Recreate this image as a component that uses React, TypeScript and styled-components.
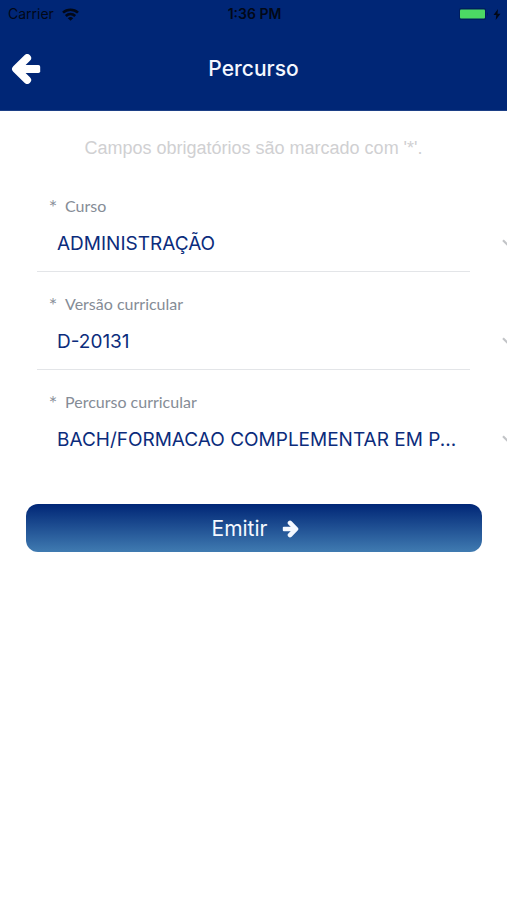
import React from "react";
import styled, { createGlobalStyle } from "styled-components";

const GlobalStyle = createGlobalStyle`
  * { box-sizing: border-box; }
  body {
    margin: 0;
    background: #ffffff;
    font-family: Inter, "Liberation Sans", sans-serif;
  }
`;

const Page = styled.div`
  min-height: 100vh;
  overflow-x: hidden;
`;

const Header = styled.header`
  background: #002676;
  border-bottom: 1px solid #1c3f86;
`;

const StatusBar = styled.div`
  display: grid;
  grid-template-columns: 1fr auto 1fr;
  align-items: center;
  height: 28px;
  padding: 0 6px 0 8px;
  color: #020817;
  font-size: 14px;
  line-height: 20px;
`;

const StatusGroup = styled.div<{ $end?: boolean }>`
  display: flex;
  align-items: center;
  justify-content: ${(p) => (p.$end ? "flex-end" : "flex-start")};
  gap: ${(p) => (p.$end ? 4 : 8)}px;
`;

const Clock = styled.time`
  font-weight: 600;
`;

const NavBar = styled.div`
  display: grid;
  grid-template-columns: 52px 1fr 52px;
  align-items: center;
  height: 82px;
`;

const BackButton = styled.button`
  display: flex;
  align-items: center;
  height: 52px;
  padding: 0 0 0 11px;
  border: 0;
  background: none;
  color: #ffffff;
`;

const Title = styled.h1`
  margin: 0;
  color: #f4f7ff;
  font-size: 21px;
  font-weight: 500;
  line-height: 24px;
  text-align: center;
`;

const Hint = styled.p`
  margin: 0;
  padding: 25px 0 14px;
  color: #d0d0d2;
  font-family: "Liberation Sans", sans-serif;
  font-size: 18px;
  line-height: 24px;
  text-align: center;
`;

const Field = styled.div`
  padding-top: 22px;
`;

const Label = styled.label`
  display: flex;
  gap: 8px;
  padding-left: 49px;
  color: #858c96;
  font-family: Lato, sans-serif;
  font-size: 16px;
  line-height: 20px;
`;

const Required = styled.span`
  font-family: Inter, sans-serif;
  font-weight: 300;
`;

const ControlRow = styled.div`
  display: flex;
  align-items: center;
  padding-left: 37px;
`;

const SelectBox = styled.div<{ $last?: boolean }>`
  flex: 1;
  min-width: 0;
  height: 56px;
  border-bottom: 1px solid ${(p) => (p.$last ? "transparent" : "#e3e5e8")};
`;

const Select = styled.select`
  display: block;
  width: 100%;
  height: 55px;
  padding: 0 4px 0 20px;
  border: 0;
  background: none;
  appearance: none;
  color: #0b2c7c;
  font-family: inherit;
  font-size: 19px;
  text-overflow: ellipsis;
`;

const ChevronSlot = styled.span`
  display: flex;
  flex: none;
  margin: 0 -9px 0 32px;
`;

const Actions = styled.div`
  padding: 36px 25px 0 26px;
`;

const SubmitButton = styled.button`
  display: flex;
  align-items: center;
  justify-content: center;
  gap: 15px;
  width: 100%;
  height: 48px;
  padding: 2px 0 0 3px;
  border: 0;
  border-radius: 12px;
  background: linear-gradient(#002676, #407bb1);
  color: #f4f8ff;
  font-family: inherit;
  font-size: 21px;
  line-height: 28px;
`;

const WifiIcon = () => (
  <svg width="17" height="13" viewBox="0 0 17 13" fill="none" stroke="currentColor" strokeWidth="2.6" aria-hidden="true">
    <path d="M1 4.6C5.2.7 11.8.7 16 4.6" />
    <path d="M3.8 8C6.5 5.5 10.5 5.5 13.2 8" />
    <path d="M8.5 12.8 5.8 10.2Q8.5 8 11.2 10.2Z" fill="currentColor" stroke="none" />
  </svg>
);

const BatteryIcon = () => (
  <svg width="31" height="12" viewBox="0 0 31 12" aria-hidden="true">
    <rect x="1" y="0" width="27" height="12" rx="2" fill="#001e5e" />
    <rect x="2" y="1.5" width="25" height="9" rx="1" fill="#4cd964" />
    <path d="M29 4q2 2 0 4z" fill="#001e5e" />
  </svg>
);

const BoltIcon = () => (
  <svg width="8" height="11" viewBox="0 0 8 11" fill="currentColor" aria-hidden="true">
    <path d="M5 0 .5 6H3.3L2.7 11 7.5 4.7H4.5Z" />
  </svg>
);

const BackIcon = () => (
  <svg width="30" height="30" viewBox="0 0 30 30" fill="none" stroke="currentColor" aria-hidden="true">
    <path d="M16.2 4 5 15 16.2 26" strokeWidth="7.8" strokeLinecap="round" strokeLinejoin="round" />
    <rect x="6" y="11" width="23.2" height="8" rx="1.8" fill="currentColor" stroke="none" />
  </svg>
);

const ForwardIcon = () => (
  <svg width="17" height="18" viewBox="0 0 17 18" fill="none" stroke="currentColor" aria-hidden="true">
    <path d="M8 2.9 14 9 8 15.1" strokeWidth="4.6" strokeLinecap="round" strokeLinejoin="round" />
    <rect x="0.8" y="6.7" width="13" height="4.6" rx="1" fill="currentColor" stroke="none" />
  </svg>
);

const ChevronIcon = () => (
  <svg width="14" height="10" viewBox="0 0 14 10" fill="none" stroke="#c2c4c7" strokeWidth="2.2" aria-hidden="true">
    <path d="M1 1.2 7 7.2 13 1.2" />
  </svg>
);

const fields = [
  { id: "curso", label: "Curso", value: "ADMINISTRAÇÃO" },
  { id: "versao", label: "Versão curricular", value: "D-20131" },
  { id: "percurso", label: "Percurso curricular", value: "BACH/FORMACAO COMPLEMENTAR EM P..." },
];

export default function App() {
  return (
    <Page>
      <GlobalStyle />
      <Header>
        <StatusBar>
          <StatusGroup>
            <span>Carrier</span>
            <WifiIcon />
          </StatusGroup>
          <Clock>1:36 PM</Clock>
          <StatusGroup $end>
            <BatteryIcon />
            <BoltIcon />
          </StatusGroup>
        </StatusBar>
        <NavBar>
          <BackButton type="button" aria-label="Voltar">
            <BackIcon />
          </BackButton>
          <Title>Percurso</Title>
        </NavBar>
      </Header>
      <main>
        <Hint>Campos obrigatórios são marcado com '*'.</Hint>
        <form onSubmit={(e) => e.preventDefault()}>
          {fields.map((f, i) => (
            <Field key={f.id}>
              <Label htmlFor={f.id}>
                <Required>*</Required>
                <span>{f.label}</span>
              </Label>
              <ControlRow>
                <SelectBox $last={i === fields.length - 1}>
                  <Select id={f.id} defaultValue={f.value}>
                    <option>{f.value}</option>
                  </Select>
                </SelectBox>
                <ChevronSlot>
                  <ChevronIcon />
                </ChevronSlot>
              </ControlRow>
            </Field>
          ))}
          <Actions>
            <SubmitButton type="submit">
              Emitir
              <ForwardIcon />
            </SubmitButton>
          </Actions>
        </form>
      </main>
    </Page>
  );
}
